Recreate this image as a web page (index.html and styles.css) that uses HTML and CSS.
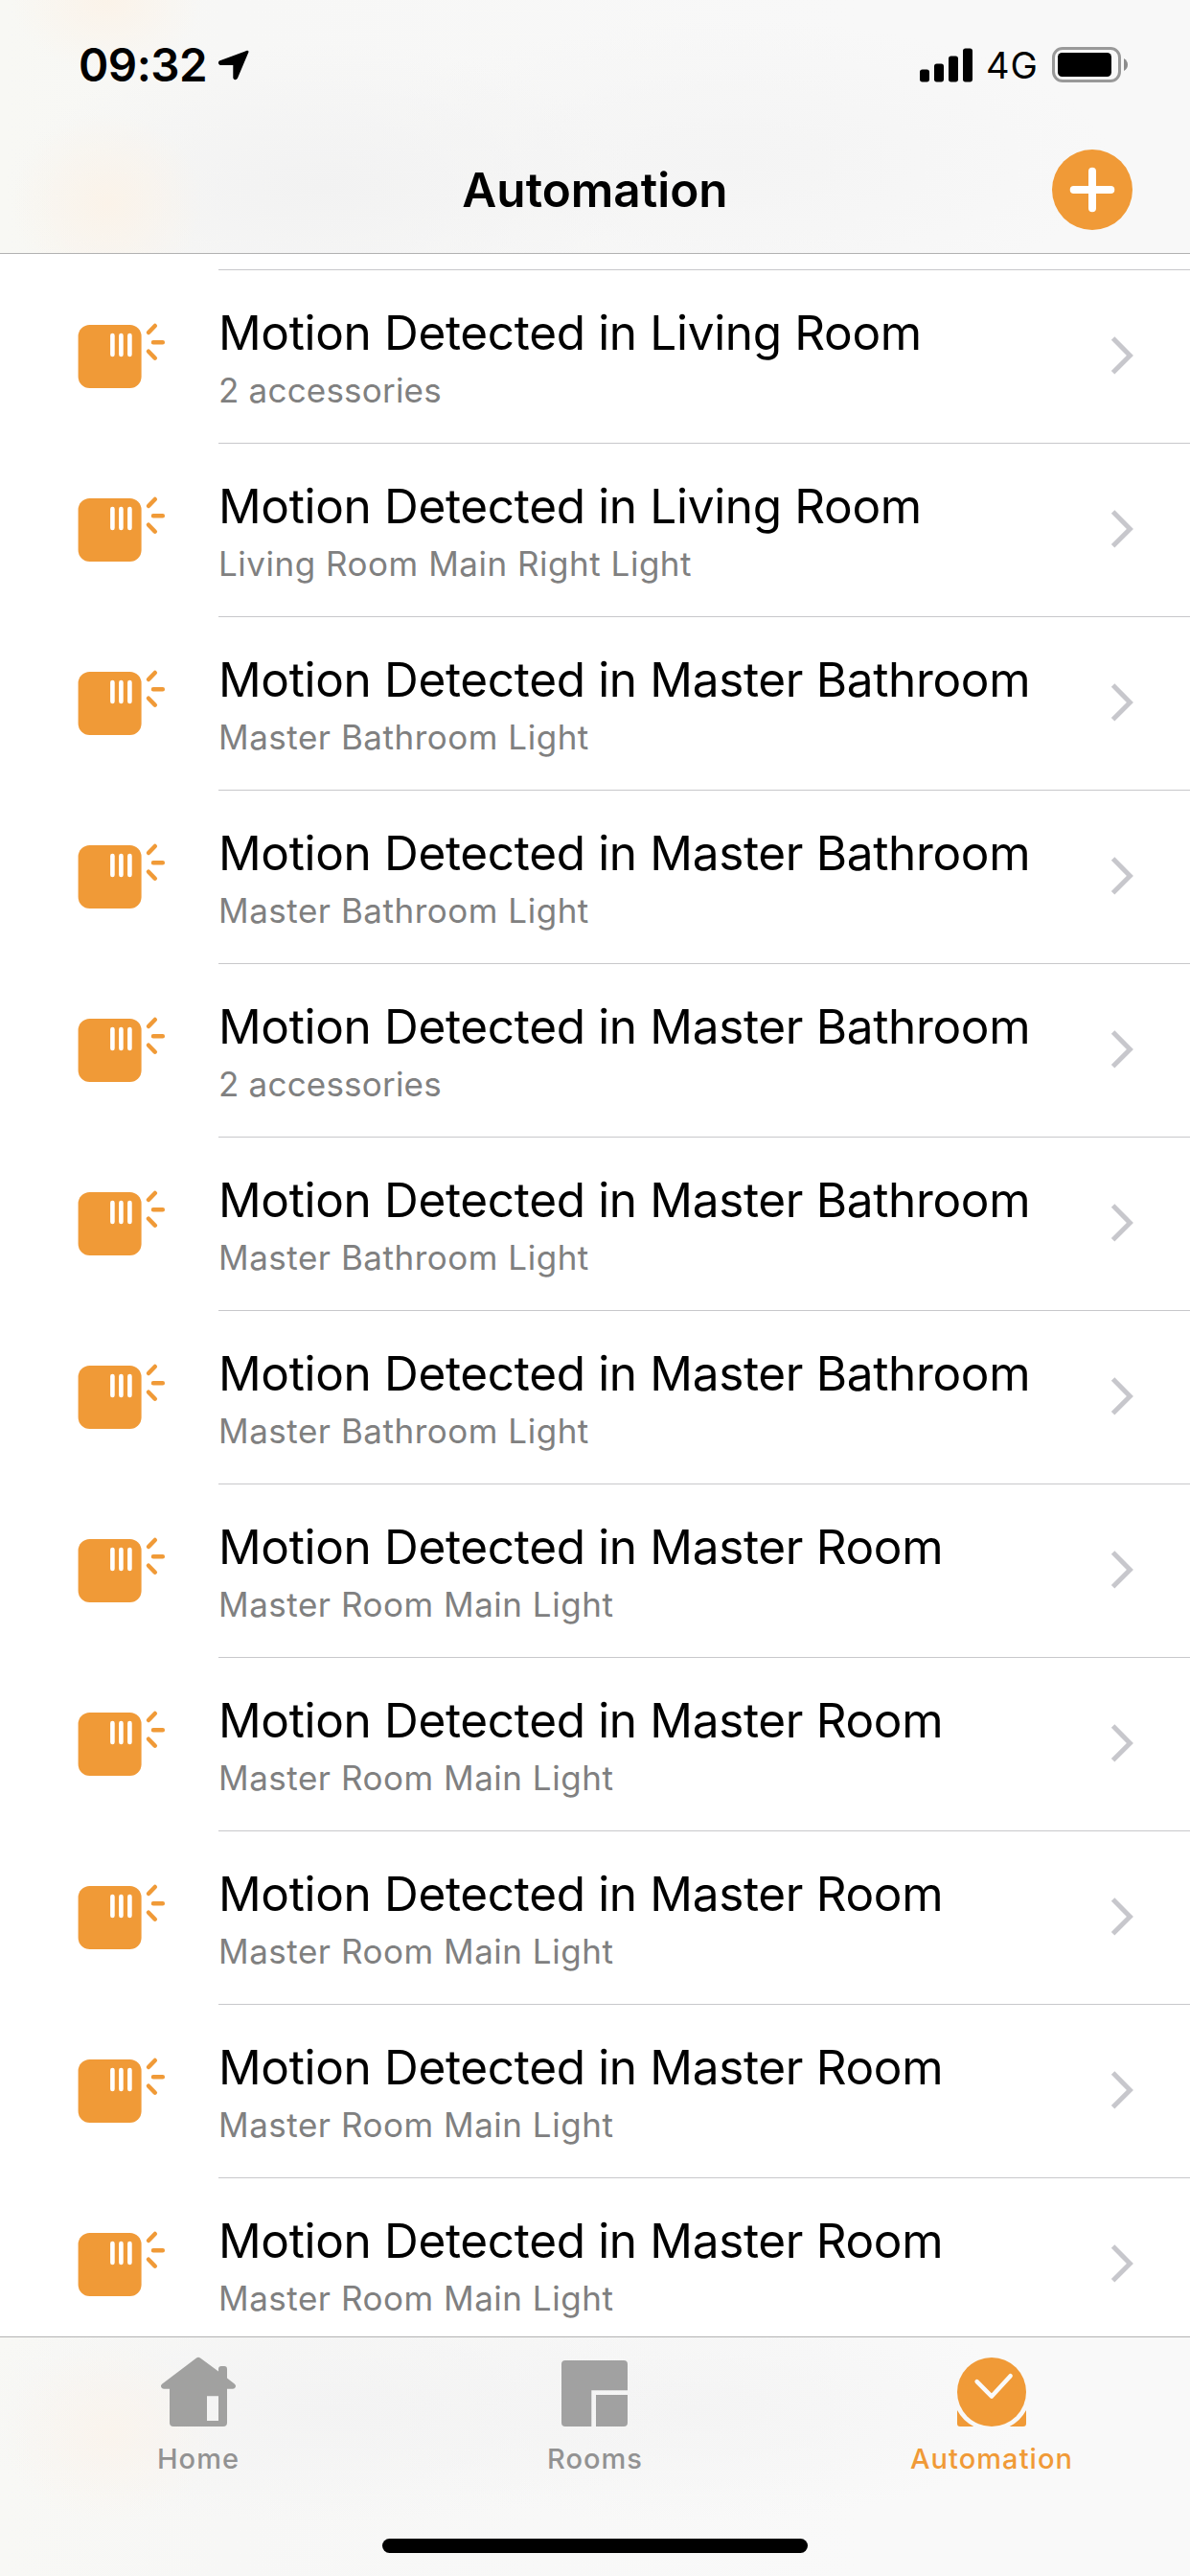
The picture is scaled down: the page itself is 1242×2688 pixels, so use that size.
FILE: index.html
```
<!DOCTYPE html>
<html lang="en">
<head>
  <meta charset="UTF-8" />
  <meta name="viewport" content="width=device-width, initial-scale=1.0"/>
  <title>Automation</title>
  <link rel="stylesheet" href="styles.css">
</head>
<body>

  <svg class="defs" width="0" height="0">
    <symbol id="icon-motion" viewBox="0 0 96 76">
      <rect x="1.6" y="4" width="66" height="66" rx="12" fill="#f09a37"/>
      <path d="M37.4 15v20M46.4 15v20M55.4 15v20" stroke="#fff" stroke-width="4.6" stroke-linecap="round"/>
      <path d="M75 12l6.8-7M80 22.3h9.8M75 31.7l6.8 7" stroke="#f09a37" stroke-width="4.5" stroke-linecap="round"/>
    </symbol>
    <symbol id="icon-chevron" viewBox="0 0 26 42">
      <path d="M3.6 3.1l17.8 17.8L3.6 38.7" fill="none" stroke="#c7c7cc" stroke-width="5"/>
    </symbol>
  </svg>

  <header class="header">
    <div class="status">
      <span class="time">09:32</span>
      <svg class="location" width="36" height="36" viewBox="0 0 36 36">
        <path d="M32.200 4L20.800 31Q19.600 32.800 18.600 31V16.600H4Q2.400 15.600 4 14.400Z" stroke="#000" stroke-width="2.6" stroke-linejoin="round"/>
      </svg>
      <div class="status-right">
        <svg width="55" height="36" viewBox="0 0 55 36">
          <rect x="0" y="22.5" width="10" height="13" rx="2.7"/>
          <rect x="15" y="16.5" width="10" height="19" rx="2.7"/>
          <rect x="30" y="8.5" width="10" height="27" rx="2.7"/>
          <rect x="45" y="0.5" width="10" height="35" rx="2.7"/>
        </svg>
        <span class="network">4G</span>
        <svg width="79" height="37" viewBox="0 0 79 37">
          <rect x="1.5" y="1.5" width="69" height="34" rx="9.5" fill="none" stroke="#999" stroke-width="3"/>
          <rect x="6" y="6" width="56" height="25" rx="4.5"/>
          <path d="M75 12v13q4-2.500 4-6.500t-4-6.500z" fill="#8c8c8c"/>
        </svg>
      </div>
    </div>
    <div class="nav">
      <h1>Automation</h1>
      <button class="add-btn" aria-label="Add">
        <svg width="84" height="84" viewBox="0 0 84 84">
          <circle cx="42" cy="42" r="42" fill="#f09a37"/>
          <path d="M42 22.700v38.600M22.700 42h38.600" stroke="#fff" stroke-width="8" stroke-linecap="round"/>
        </svg>
      </button>
    </div>
  </header>

  <main class="list" id="list"></main>

  <footer class="tabbar">
    <nav class="tabs">
      <a class="tab">
        <svg width="84" height="84" viewBox="0 0 84 84">
          <path fill="#a1a1a0" fill-rule="evenodd" d="M40 6.500Q42 5 44 6.500L63 20.500V18q0-3 3-3h3q3 0 3 3v9.500l8 6.200q1.600 1.500 .8 3.300q-.8 1.700-2.800 1.700h-6V74q0 4-4 4H16q-4 0-4-4V38.700H6q-2 0-2.800-1.700q-.8-1.800 .8-3.300zM51 46.300V72h12V46.300z"/>
        </svg>
        <span>Home</span>
      </a>
      <a class="tab">
        <svg width="84" height="84" viewBox="0 0 84 84">
          <path fill="#a1a1a1" d="M11 9h61q4 0 4 4v27.300H38.300V78H11q-4 0-4-4V13q0-4 4-4zM43 45h33v29q0 4-4 4H43z"/>
        </svg>
        <span>Rooms</span>
      </a>
      <a class="tab active">
        <svg width="84" height="84" viewBox="0 0 84 84">
          <circle cx="42" cy="42" r="36" fill="#f09a37"/>
          <path d="M26.600 31.200L42 46.600L61.600 25.200" fill="none" stroke="#fafafa" stroke-width="4.500" stroke-linecap="round" stroke-linejoin="round"/>
          <path fill="#f09a37" d="M6 61A40.600 40.600 0 0 0 23.300 78H9q-3 0-3-3zM78 61A40.600 40.600 0 0 1 60.700 78H75q3 0 3-3z"/>
        </svg>
        <span>Automation</span>
      </a>
    </nav>
    <div class="home-indicator"></div>
  </footer>

<script>
  const automations = [
    ["Living Room", "2 accessories"],
    ["Living Room", "Living Room Main Right Light"],
    ["Master Bathroom", "Master Bathroom Light"],
    ["Master Bathroom", "Master Bathroom Light"],
    ["Master Bathroom", "2 accessories"],
    ["Master Bathroom", "Master Bathroom Light"],
    ["Master Bathroom", "Master Bathroom Light"],
    ["Master Room", "Master Room Main Light"],
    ["Master Room", "Master Room Main Light"],
    ["Master Room", "Master Room Main Light"],
    ["Master Room", "Master Room Main Light"],
    ["Master Room", "Master Room Main Light"]
  ];

  document.getElementById("list").innerHTML = automations.map(([room, detail]) => `
    <div class="row">
      <svg class="row-icon"><use href="#icon-motion"/></svg>
      <div class="row-body">
        <div class="row-text">
          <div class="row-title">Motion Detected in ${room}</div>
          <div class="row-detail${detail.endsWith("accessories") ? " count" : ""}">${detail}</div>
        </div>
        <svg class="row-chevron"><use href="#icon-chevron"/></svg>
      </div>
    </div>`).join("");
</script>
</body>
</html>
```
FILE: styles.css
```
* { box-sizing: border-box; }
body {
  margin: 0;
  width: 1242px;
  height: 2688px;
  display: flex;
  flex-direction: column;
  overflow: hidden;
  background-color: #fff;
  color: #000;
  font-family: "Inter", "Helvetica Neue", sans-serif;
}
svg { display: block; flex: none; }
.defs { position: absolute; }

/* header */
.header {
  flex: none;
  height: 265px;
  border-bottom: 1px solid #b2b2b2;
  background:
    radial-gradient(ellipse 100px 95px at 112px 212px, #fbf3e9, rgba(251, 243, 233, 0)),
    radial-gradient(ellipse 100px 75px at 112px 0, #fbf3e9, rgba(251, 243, 233, 0)),
    radial-gradient(ellipse 330px 150px at 336px 195px, #f2f2f2, rgba(242, 242, 242, 0)),
    radial-gradient(ellipse 400px 150px at 760px 170px, #f4f4f4, rgba(244, 244, 244, 0)),
    linear-gradient(90deg, #f8f8f4, #f7f7f6 240px, #f8f8f8 900px);
}
.status {
  height: 132px;
  padding: 38px 65px 35px 81px;
  display: flex;
  align-items: center;
}
.time {
  width: 145px;
  padding-left: 1px;
  font-size: 47.5px;
  font-weight: 600;
  letter-spacing: -0.5px;
  line-height: 59px;
}
.status-right {
  margin-left: auto;
  display: flex;
  align-items: center;
}
.network {
  width: 83px;
  padding: 1px 0 0 14px;
  font-size: 38px;
  letter-spacing: 1px;
  line-height: 58px;
}
.nav {
  height: 132px;
  padding: 0 60px;
  display: grid;
  grid-template-columns: 1fr auto 1fr;
  align-items: center;
}
.nav h1 {
  grid-column: 2;
  margin: 0;
  font-size: 49.5px;
  font-weight: 600;
  line-height: 60px;
}
.add-btn {
  justify-self: end;
  padding: 0;
  border: none;
  background: none;
}

/* automation list */
.list {
  flex: 1;
  min-height: 0;
  overflow: hidden;
  padding-top: 16px;
}
.row {
  height: 181px;
  padding-left: 80px;
  display: flex;
}
.row-icon {
  width: 96px;
  height: 76px;
  margin: 54px 52px 0 0;
}
.row-body {
  flex: 1;
  padding: 35px 58px 0 0;
  border-top: 1px solid #c8c8cb;
  display: flex;
  justify-content: space-between;
}
.row-title {
  font-size: 49.5px;
  letter-spacing: -0.34px;
  line-height: 60px;
}
.row-detail {
  margin-top: 8px;
  color: #808080;
  font-size: 35px;
  letter-spacing: 0.52px;
  line-height: 44px;
}
.row-detail.count { letter-spacing: 0.2px; }
.row-chevron {
  width: 26px;
  height: 42px;
  margin-top: 33px;
}

/* tab bar */
.tabbar {
  flex: none;
  height: 250px;
  border-top: 1px solid #b2b2b2;
  display: flex;
  flex-direction: column;
  justify-content: space-between;
  background:
    radial-gradient(ellipse 110px 95px at 114px 100px, #faf4ed, rgba(250, 244, 237, 0)),
    radial-gradient(ellipse 400px 120px at 340px 74px, #f3f3f3, rgba(243, 243, 243, 0)),
    radial-gradient(ellipse 360px 120px at 720px 74px, #f4f4f4, rgba(244, 244, 244, 0)),
    linear-gradient(90deg, #f8f8f5, #f7f7f6 240px, #f9f9f9 900px);
}
.tabs { display: flex; }
.tab {
  flex: 1;
  padding-top: 15px;
  display: flex;
  flex-direction: column;
  align-items: center;
  color: #929292;
  font-size: 29px;
  font-weight: 500;
  letter-spacing: 1.05px;
  line-height: 36px;
}
.tab span { margin-top: 10px; }
.tab.active { color: #f09a37; }
.home-indicator {
  width: 444px;
  height: 15px;
  margin: 0 auto 24px;
  border-radius: 8px;
  background-color: #000;
}
```
